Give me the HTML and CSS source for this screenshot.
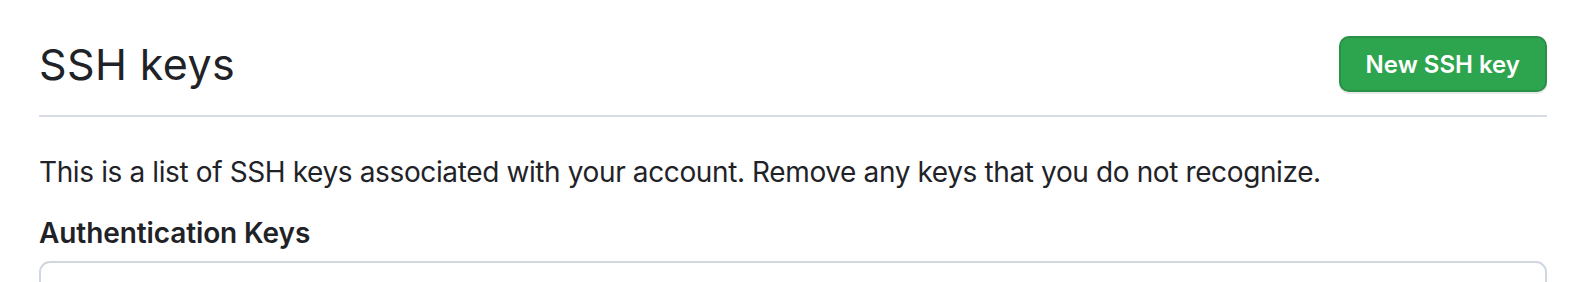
FILE: index.html
```html
<!DOCTYPE html>
<html lang="en">
<head>
<meta charset="utf-8">
<title>SSH keys</title>
<link rel="stylesheet" href="styles.css">
</head>
<body>
<div class="page">
  <div class="subhead">
    <h2 class="subhead-title">SSH keys</h2>
    <button class="btn-primary" type="button">New SSH key</button>
  </div>
  <p class="intro">This is a list of SSH keys associated with your account. Remove any keys that you do not recognize.</p>
  <h3 class="section-title">Authentication Keys</h3>
  <div class="box"></div>
</div>
</body>
</html>
```

FILE: styles.css
```css
* { box-sizing: border-box; }
html, body { margin: 0; background: #ffffff; }
body {
  font-family: Inter, "Liberation Sans", sans-serif;
  color: #1f2328;
  overflow: hidden;
}
.page {
  padding: 36px 32px 0 39px;
}
.subhead {
  display: flex;
  justify-content: space-between;
  align-items: center;
  border-bottom: 2px solid #d8dee4;
  padding-bottom: 23px;
}
.subhead-title {
  margin: 0;
  font-size: 43px;
  font-weight: 400;
  line-height: 56px;
  letter-spacing: 0.4px;
}
.btn-primary {
  height: 56px;
  padding: 0 25px;
  font-family: inherit;
  font-size: 24px;
  font-weight: 600;
  color: #ffffff;
  background: #2da44e;
  border: 2px solid rgba(27, 31, 36, 0.15);
  border-radius: 10px;
  box-shadow: 0 2px 0 rgba(27, 31, 36, 0.1);
}
.intro {
  margin: 34px 0 0;
  font-size: 28px;
  line-height: 42px;
  letter-spacing: -0.38px;
}
.section-title {
  margin: 19px 0 0;
  font-size: 28px;
  font-weight: 600;
  line-height: 42px;
  letter-spacing: -0.1px;
}
.box {
  margin-top: 7px;
  height: 60px;
  border: 2px solid #d0d7de;
  border-radius: 11px;
}
```
